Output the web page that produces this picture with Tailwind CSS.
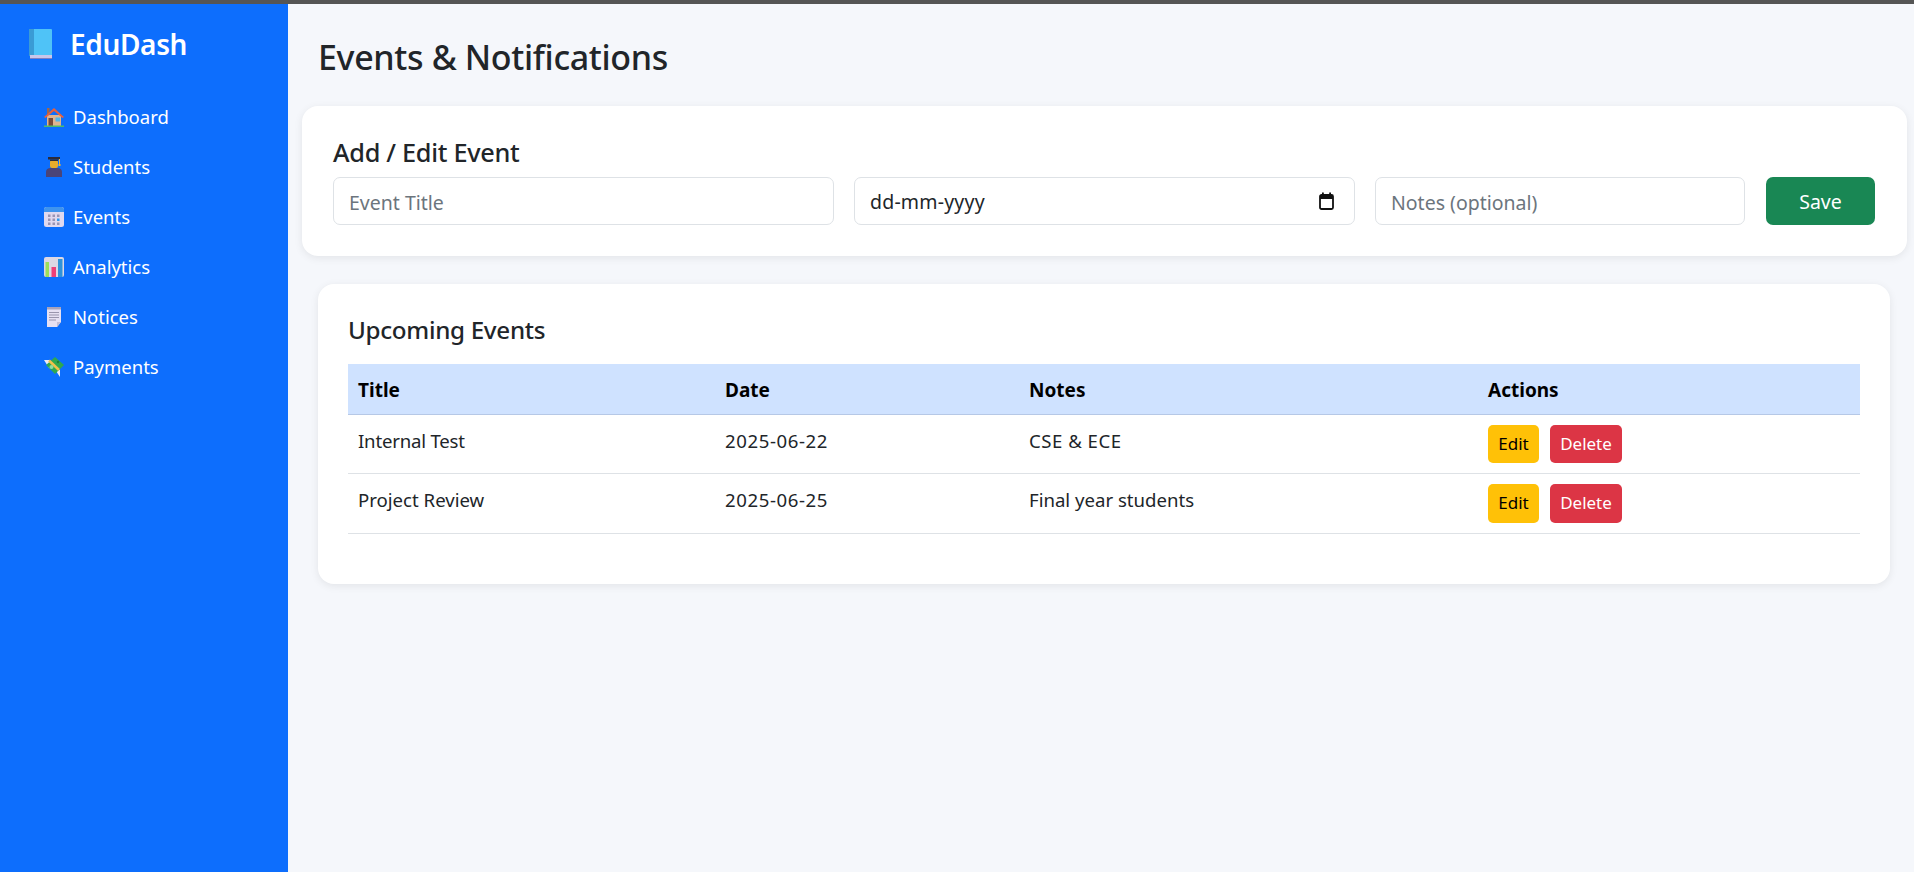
<!DOCTYPE html>
<html lang="en">
<head>
  <meta charset="UTF-8" />
  <meta name="viewport" content="width=device-width, initial-scale=1" />
  <title>Events &amp; Notifications - EduDash</title>
  <script src="https://cdn.jsdelivr.net/npm/@tailwindcss/browser@4"></script>
</head>
<body class="h-[872px] overflow-hidden bg-[#f5f7fb] font-['Noto_Sans',sans-serif] text-[#212529]">
  <div class="h-[4px] bg-[#555555]"></div>
  <div class="flex h-[868px]">

    <!-- Sidebar -->
    <aside class="w-[288px] shrink-0 bg-[#0d6efd] text-white">
      <div class="flex items-center h-[36px] mt-[22px] pl-[29px] gap-[18px]">
        <svg class="w-[23px] h-[30px]" viewBox="0 0 23 30">
          <rect x="0" y="0" width="23" height="27" rx="1" fill="#4fc3f7" />
          <rect x="0" y="0" width="5" height="27" fill="#3a9bd5" />
          <rect x="1" y="26" width="22" height="3" fill="#c9c6ea" />
          <rect x="1" y="29" width="22" height="1" fill="#7f7fc0" />
        </svg>
        <span class="text-[28px] font-semibold tracking-[-0.35px]">EduDash</span>
      </div>

      <nav class="mt-[30px] pl-[44px] flex flex-col text-[18.5px]">
        <a class="flex items-center h-[50px] gap-[9px]">
          <svg class="w-[20px] h-[20px]" viewBox="0 0 20 20">
            <rect x="3" y="1" width="2.5" height="6" fill="#a1674a" />
            <rect x="3" y="8" width="14" height="11" fill="#e0b48f" />
            <path d="M0 10 L10 1 L20 10 L18.5 11 L10 4 L1.5 11 Z" fill="#e8603c" />
            <rect x="4.5" y="11" width="4.5" height="8" fill="#7a4a38" />
            <rect x="11.5" y="10.5" width="4.5" height="4" fill="#4fb6ea" />
            <rect x="0" y="18.5" width="20" height="1.5" fill="#4cbb6c" />
          </svg>
          Dashboard
        </a>
        <a class="flex items-center h-[50px] gap-[9px]">
          <svg class="w-[20px] h-[20px]" viewBox="0 0 20 20">
            <path d="M2 20 V15 Q2 11 7 11 H13 Q18 11 18 15 V20 Z" fill="#4b4478" />
            <rect x="6" y="3" width="8" height="8" rx="2" fill="#e9ad2c" />
            <rect x="4" y="0" width="12" height="2.5" fill="#2b2b3b" />
            <rect x="6" y="2.5" width="8" height="1.5" fill="#2b2b3b" />
            <rect x="15" y="2" width="1" height="5" fill="#f2b632" />
            <rect x="14.5" y="7" width="2" height="2" fill="#f2b632" />
          </svg>
          Students
        </a>
        <a class="flex items-center h-[50px] gap-[9px]">
          <svg class="w-[20px] h-[20px]" viewBox="0 0 20 20">
            <rect x="0" y="0" width="20" height="20" rx="2.5" fill="#e0d9ef" />
            <path d="M0 5 V2.5 A2.5 2.5 0 0 1 2.5 0 H17.5 A2.5 2.5 0 0 1 20 2.5 V5 Z" fill="#3f94ee" />
            <path fill="#9a94b4" d="M4 7.500h2.500v2.500H4zM8.500 7.500h2.500v2.500H8.500zM13 7.500h2.500v2.500H13zM4 11.500h2.500v2.500H4zM8.500 11.500h2.500v2.500H8.500zM4 15.500h2.500v2.500H4zM8.500 15.500h2.500v2.500H8.500zM13 15.500h2.500v2.500H13z" />
            <rect x="13" y="11.500" width="2.500" height="2.500" fill="#2f9bef" />
          </svg>
          Events
        </a>
        <a class="flex items-center h-[50px] gap-[9px]">
          <svg class="w-[20px] h-[20px]" viewBox="0 0 20 20">
            <rect x="0" y="0" width="20" height="20" rx="2" fill="#dcd8e4" />
            <rect x="1.500" y="5" width="3.500" height="15" fill="#9be05a" />
            <rect x="7.500" y="10" width="4.500" height="10" fill="#ee3f77" />
            <rect x="14" y="2" width="4.500" height="18" fill="#2f93d9" />
          </svg>
          Analytics
        </a>
        <a class="flex items-center h-[50px] gap-[9px]">
          <svg class="w-[20px] h-[20px]" viewBox="0 0 20 20">
            <path d="M3 1 H17 V15 L13 20 H3 Z" fill="#e6e0f2" />
            <rect x="3" y="0" width="14" height="2.500" fill="#a8a3bb" />
            <path stroke="#9a95ad" stroke-width="1" d="M5 5.500H15M5 8H15M5 10.500H15M5 13H12" />
            <path d="M17 15 L13 20 V15 Z" fill="#c4bed6" />
          </svg>
          Notices
        </a>
        <a class="flex items-center h-[50px] gap-[9px]">
          <svg class="w-[20px] h-[20px]" viewBox="0 0 20 20">
            <path d="M0 3 L5 3 L10 10 L16 13 L16 20 L12 14 L5 11 Z" fill="#eceaf2" />
            <path d="M2 8 L11 0 L20 8 L11 17 Z" fill="#2fa84f" />
            <path d="M5 3.500 L15 13" stroke="#f2c14b" stroke-width="2.500" />
            <circle cx="7.500" cy="10" r="2" fill="#8fdc9f" />
            <circle cx="14" cy="5" r="1.200" fill="#1f7f3a" />
          </svg>
          Payments
        </a>
      </nav>
    </aside>

    <!-- Main -->
    <main class="flex-1 min-w-0 pl-[14px] pr-[7px]">
      <h1 class="mt-[26px] ml-[16px] h-[54px] leading-[54px] text-[34px] font-medium tracking-[-0.35px]">Events &amp; Notifications</h1>

      <section class="mt-[22px] h-[150px] bg-white rounded-[16px] shadow-[0_2px_8px_rgba(0,0,0,0.08)] px-[31px] pt-[30px]">
        <h2 class="h-[41px] text-[25.3px] leading-[32px] font-medium tracking-[-0.3px]">Add / Edit Event</h2>
        <form class="flex gap-[20px] text-[19.5px]">
          <input type="text" placeholder="Event Title" class="w-[501px] h-[48px] px-[15px] pt-[2px] bg-white border border-[#dee2e6] rounded-[7px] placeholder:text-[#6c757d]" />
          <div class="flex items-center justify-between w-[501px] h-[48px] pl-[15px] pr-[20px] pt-[2px] border border-[#dee2e6] rounded-[7px]">
            <span class="tracking-[0.2px]">dd-mm-yyyy</span>
            <svg class="w-[15px] h-[18px] -mt-[2px]" viewBox="0 0 15 18">
              <rect x="1" y="3" width="13" height="14" rx="1.500" fill="none" stroke="#111" stroke-width="1.800" />
              <rect x="1" y="3" width="13" height="4" fill="#111" />
              <rect x="3" y="0.500" width="1.800" height="3" fill="#111" />
              <rect x="10.200" y="0.500" width="1.800" height="3" fill="#111" />
            </svg>
          </div>
          <input type="text" placeholder="Notes (optional)" class="w-[370px] h-[48px] px-[15px] pt-[2px] bg-white border border-[#dee2e6] rounded-[7px] placeholder:text-[#6c757d]" />
          <button type="button" class="ml-[1px] w-[109px] h-[48px] pt-[2px] bg-[#198754] text-white rounded-[7px]">Save</button>
        </form>
      </section>

      <section class="mt-[28px] ml-[16px] mr-[17px] h-[300px] bg-white rounded-[16px] shadow-[0_2px_8px_rgba(0,0,0,0.08)] px-[30px] pt-[30px]">
        <h2 class="h-[50px] text-[24.2px] leading-[32px] font-medium tracking-[-0.3px]">Upcoming Events</h2>
        <table class="w-[1512px] table-fixed border-collapse text-[18.6px]">
          <thead>
            <tr class="h-[50px] bg-[#cfe2ff] border-b border-[#b6c8e6] text-black text-left text-[19px]">
              <th class="w-[367px] pl-[10px] pt-[2px] font-bold">Title</th>
              <th class="w-[304px] pl-[10px] pt-[2px] font-bold">Date</th>
              <th class="w-[459px] pl-[10px] pt-[2px] font-bold">Notes</th>
              <th class="pl-[10px] pt-[2px] font-bold">Actions</th>
            </tr>
          </thead>
          <tbody>
            <tr class="h-[59px] border-b border-[#dee2e6]">
              <td class="pl-[10px] pb-[6px] tracking-[-0.2px]">Internal Test</td>
              <td class="pl-[10px] pb-[6px] tracking-[0.6px]">2025-06-22</td>
              <td class="pl-[10px] pb-[6px] tracking-[0.5px]">CSE &amp; ECE</td>
              <td class="pl-[10px]">
                <div class="flex gap-[11px] text-[17px]">
                  <button type="button" class="w-[51px] h-[38px] bg-[#ffc107] text-black rounded-[5px]">Edit</button>
                  <button type="button" class="w-[72px] h-[38px] bg-[#dc3545] text-white rounded-[5px]">Delete</button>
                </div>
              </td>
            </tr>
            <tr class="h-[60px] border-b border-[#dee2e6]">
              <td class="pl-[10px] pb-[6px]">Project Review</td>
              <td class="pl-[10px] pb-[6px] tracking-[0.6px]">2025-06-25</td>
              <td class="pl-[10px] pb-[6px]">Final year students</td>
              <td class="pl-[10px]">
                <div class="flex gap-[11px] text-[17px]">
                  <button type="button" class="w-[51px] h-[39px] bg-[#ffc107] text-black rounded-[5px]">Edit</button>
                  <button type="button" class="w-[72px] h-[39px] bg-[#dc3545] text-white rounded-[5px]">Delete</button>
                </div>
              </td>
            </tr>
          </tbody>
        </table>
      </section>
    </main>
  </div>
</body>
</html>
